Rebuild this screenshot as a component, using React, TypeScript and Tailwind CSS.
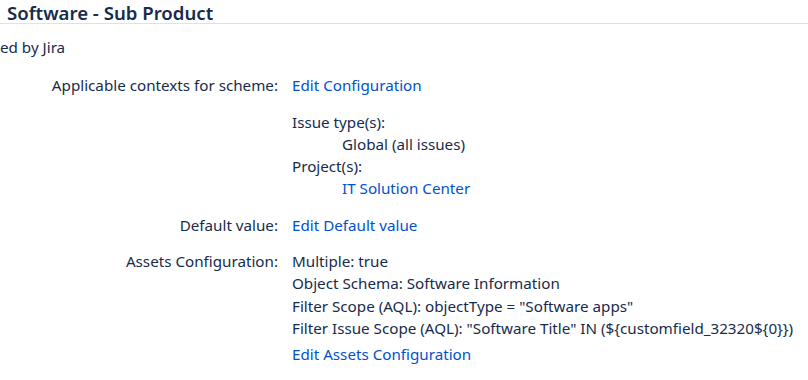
export default function App() {
  return (
    <div className="w-[808px] h-[380px] overflow-hidden bg-white text-[#172b4d] font-['Noto_Sans',sans-serif] text-[15.2px]">
      <div className="border-b border-[#dfe1e6] pl-[7px] h-[24px] flex items-end">
        <h2 className="text-[18.6px] leading-[24px] font-semibold -mb-[2px]">Software - Sub Product</h2>
      </div>
      <div className="mt-[12px] leading-[22px]">ed by Jira</div>
      <div className="mt-[16px] flex flex-col leading-[22px]">
        <div className="flex gap-[14px]">
          <div className="w-[278px] text-right">Applicable contexts for scheme:</div>
          <div className="flex flex-col">
            <a className="text-[#0052cc]">Edit Configuration</a>
            <div className="mt-[15px]">Issue type(s):</div>
            <div className="pl-[50px]">Global (all issues)</div>
            <div>Project(s):</div>
            <a className="pl-[50px] text-[#0052cc]">IT Solution Center</a>
          </div>
        </div>
        <div className="mt-[15px] flex gap-[14px]">
          <div className="w-[278px] text-right">Default value:</div>
          <a className="text-[#0052cc]">Edit Default value</a>
        </div>
        <div className="mt-[14px] flex gap-[14px]">
          <div className="w-[278px] text-right">Assets Configuration:</div>
          <div className="flex flex-col leading-[22.4px]">
            <div>Multiple: true</div>
            <div>Object Schema: Software Information</div>
            <div>Filter Scope (AQL): objectType = "Software apps"</div>
            <div>{'Filter Issue Scope (AQL): "Software Title" IN (${customfield_32320${0}})'}</div>
            <a className="mt-[3px] text-[#0052cc]">Edit Assets Configuration</a>
          </div>
        </div>
      </div>
    </div>
  )
}
